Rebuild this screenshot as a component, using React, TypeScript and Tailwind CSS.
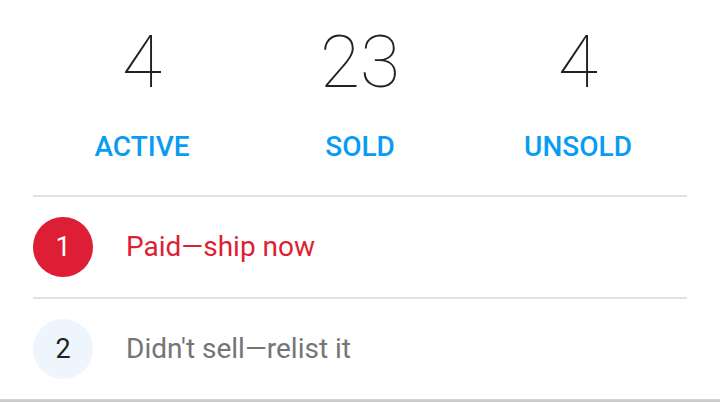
export default function App() {
  const stats = [
    { n: '4', label: 'ACTIVE' },
    { n: '23', label: 'SOLD' },
    { n: '4', label: 'UNSOLD' },
  ];
  return (
    <div
      className="w-[720px] h-[402px] bg-white flex flex-col overflow-hidden"
      style={{ fontFamily: 'Roboto, sans-serif' }}
    >
      <div className="px-[33px] flex flex-col flex-1">
        {/* stats */}
        <div className="grid grid-cols-3 pt-[17px] h-[195px]">
          {stats.map((s) => (
            <div key={s.label} className="flex flex-col items-center">
              <span className="text-[73px] leading-[90px] font-thin text-[#222]">{s.n}</span>
              <span className="mt-[23px] text-[28px] leading-[34px] font-medium text-[#0a9cf2]">
                {s.label}
              </span>
            </div>
          ))}
        </div>
        <div className="h-[2px] bg-[#e2e2e2]" />
        {/* rows */}
        <div className="flex items-center gap-[33px] h-[100px]">
          <div className="w-[60px] h-[60px] rounded-full bg-[#dd1e34] text-white flex items-center justify-center text-[27px]">
            1
          </div>
          <span className="text-[28px] text-[#dd1e34]">Paid—ship now</span>
        </div>
        <div className="h-[2px] bg-[#e2e2e2]" />
        <div className="flex items-center gap-[33px] flex-1">
          <div className="w-[60px] h-[60px] rounded-full bg-[#eef5fc] text-[#222] flex items-center justify-center text-[27px]">
            2
          </div>
          <span className="text-[28px] text-[#757575]">Didn't sell—relist it</span>
        </div>
      </div>
      <div className="h-[3px] bg-gradient-to-b from-[#d4d4d4] to-[#c4c4c4]" />
    </div>
  );
}
